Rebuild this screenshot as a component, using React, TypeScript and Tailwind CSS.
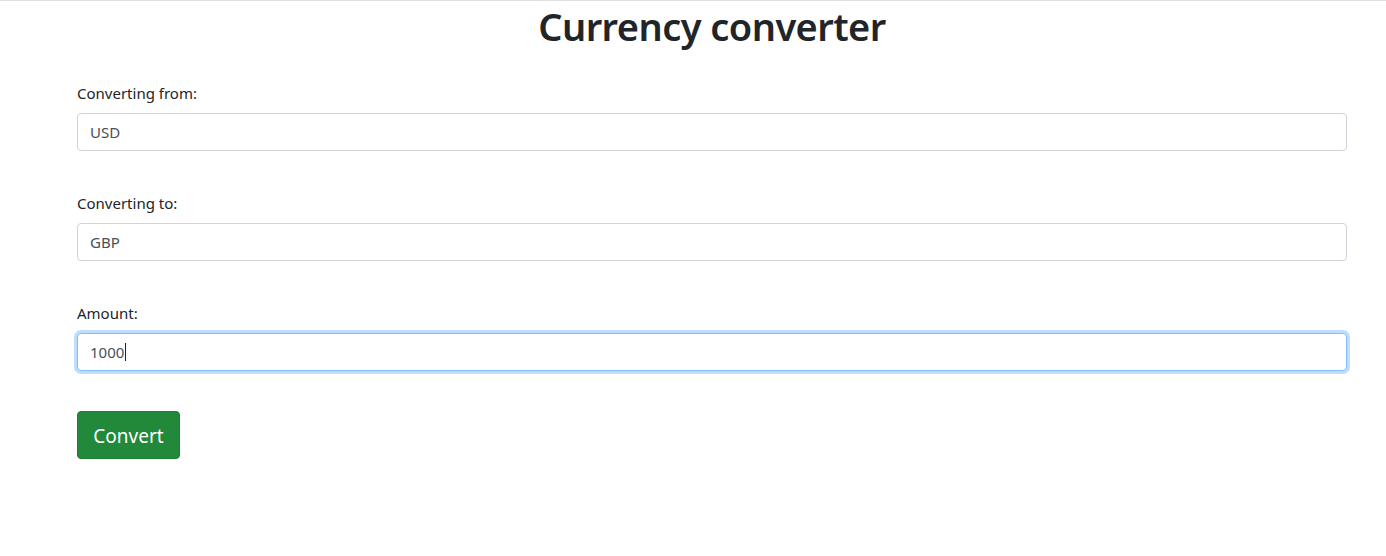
export default function App() {
    const field = "flex h-[38px] w-full items-center rounded-[4px] border border-[#ced4da] bg-white px-3 text-[15px] text-[#495057]";

    return (
        <div className="min-h-[556px] w-full border-t border-[#dee2e6] bg-white font-['Noto_Sans',sans-serif] text-[#212529]">
            <div className="ml-[77px] w-[1270px]">
                {/* Title */}
                <h1 className="mt-[1px] text-center text-[38px] font-semibold leading-[48px] tracking-[-0.55px]">
                    Currency converter
                </h1>

                <form className="mt-[31px]">
                    {/* From */}
                    <div>
                        <label className="mb-2 block text-[15px] leading-[24px]">Converting from:</label>
                        <div className={field}>USD</div>
                    </div>

                    {/* To */}
                    <div className="mt-[40px]">
                        <label className="mb-2 block text-[15px] leading-[24px]">Converting to:</label>
                        <div className={field}>GBP</div>
                    </div>

                    {/* Amount */}
                    <div className="mt-[40px]">
                        <label className="mb-2 block text-[15px] leading-[24px]">Amount:</label>
                        <div className="flex h-[38px] w-full items-center rounded-[4px] border border-[#80bdff] bg-white px-3 text-[15px] text-[#495057] shadow-[0_0_0_3px_rgba(0,123,255,0.25)]">
                            1000
                            <span className="ml-[1px] inline-block h-[18px] w-[1px] bg-[#212529]"></span>
                        </div>
                    </div>

                    {/* Submit */}
                    <button
                        type="button"
                        className="mt-[40px] h-[48px] w-[103px] rounded-[4px] border border-[#1e7e34] bg-[#22883a] pt-[3px] text-[19px] text-white"
                    >
                        Convert
                    </button>
                </form>
            </div>
        </div>
    );
}
